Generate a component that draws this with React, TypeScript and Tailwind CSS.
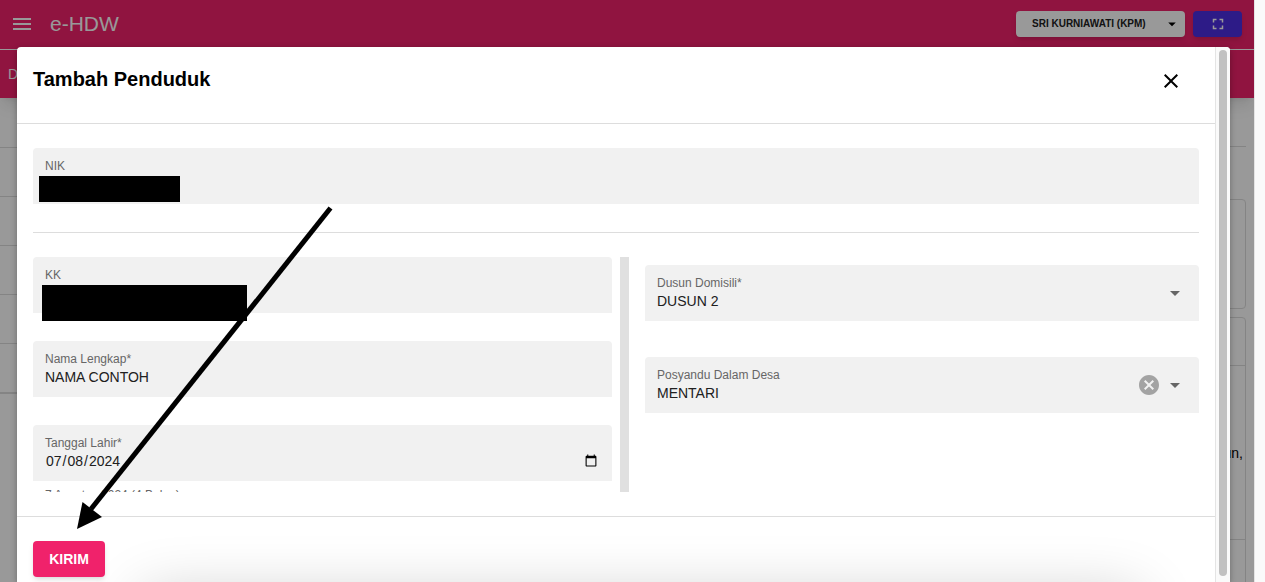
import React from 'react';
import { MdArrowDropDown, MdCancel, MdClose, MdFullscreen, MdMenu } from 'react-icons/md';

interface IFieldProps {
  id: string;
  label: string;
  children: React.ReactNode;
}

const inputStyle = 'block h-5 w-full bg-transparent text-sm leading-5 text-[#202020] outline-none';

const rows = ['a', 'b', 'c', 'd', 'e'];

const Field = ({ id, label, children }: IFieldProps) => {
  return (
    <div className="relative h-14 shrink-0 rounded-t bg-[#f1f1f1] px-3 pt-2.5">
      <label htmlFor={id} className="block h-4 text-xs leading-4 text-[#666]">{label}</label>
      {children}
    </div>
  );
}

const Header = () => {
  return (
    <header className="relative bg-[#f0226b] text-white shadow-lg">
      <div className="flex h-[50px] items-center justify-between border-b border-white pr-3 pb-0.5 pl-2.5">
        <div className="flex items-center gap-4">
          <button type="button" aria-label="Menu"><MdMenu size={24} /></button>
          <h1 className="text-[21px] leading-6">e-HDW</h1>
        </div>
        <div className="flex items-center gap-2">
          <button type="button" className="flex h-[26px] w-[169px] items-center justify-between rounded-sm bg-white pr-1 pl-4 text-[10px] font-bold text-[#202020] shadow-md">
            SRI KURNIAWATI (KPM)
            <MdArrowDropDown size={18} className="text-black" />
          </button>
          <button type="button" aria-label="Fullscreen" className="flex h-[26px] w-[49px] items-center justify-center rounded-sm bg-[#4b2de1] shadow-md">
            <MdFullscreen size={18} />
          </button>
        </div>
      </div>
      <nav className="flex h-12 items-center px-2 text-sm">
        <a href="#">D</a>
      </nav>
    </header>
  );
}

const Page = () => {
  return (
    <div className="h-full overflow-hidden bg-white">
      <Header />
      <div className="flex items-start justify-between">
        <ul className="w-2/5 border-b border-[#ddd]">
          <li className="h-[50px] border-b border-[#ddd]" />
          {rows.map((row) => (
            <li key={row} className="h-[49px] border-b border-[#ddd]" />
          ))}
        </ul>
        <div className="w-2/5 pr-2">
          <div className="h-[49px] border-b border-[#ddd]" />
          <div className="mt-[52px] h-[110px] rounded border border-[#ddd]" />
          <div className="mt-2 h-80 rounded border border-[#ddd]">
            <div className="h-12 border-b border-[#ddd]" />
            <div className="h-[174px] border-b border-[#ddd] pt-[77px] pr-0.5 text-right text-sm">
              un,
            </div>
          </div>
        </div>
      </div>
    </div>
  );
}

const Dialog = () => {
  return (
    <section role="dialog" aria-labelledby="judul" className="relative flex h-full overflow-hidden rounded-t bg-white shadow-[0_2px_6px_rgba(0,0,0,0.3)]">
      <form className="min-w-0 flex-1">
        <div className="flex h-[77px] items-start justify-between border-b border-[#ddd] pt-5 pr-8 pl-4">
          <h2 id="judul" className="text-xl leading-6 font-bold text-black">Tambah Penduduk</h2>
          <button type="button" aria-label="Tutup" className="pt-0.5 text-black"><MdClose size={24} /></button>
        </div>

        <div className="px-4 py-6">
          <Field id="nik" label="NIK">
            <input id="nik" className={inputStyle} />
            <div className="absolute top-7 left-1.5 h-[26px] w-[141px] bg-black" />
          </Field>
          <hr className="mt-7 mb-6 border-[#ddd]" />

          <div className="flex h-[235px] overflow-hidden">
            <div className="flex min-w-0 flex-1 flex-col gap-7">
              <Field id="kk" label="KK">
                <input id="kk" className={inputStyle} />
                <div className="absolute top-7 left-[9px] h-9 w-[205px] bg-black" />
              </Field>
              <Field id="nama" label="Nama Lengkap*">
                <input id="nama" className={inputStyle} defaultValue="NAMA CONTOH" />
              </Field>
              <div>
                <Field id="lahir" label="Tanggal Lahir*">
                  <input id="lahir" type="date" className={inputStyle} defaultValue="2024-07-08" />
                </Field>
                <p className="px-3 pt-1.5 text-xs leading-4 text-[#666]">7 Agustus 2024 (4 Bulan)</p>
              </div>
            </div>
            <div className="mr-4 ml-2 w-[9px] bg-[#e0e0e0]" />
            <div className="flex w-[554px] flex-col gap-9 pt-2">
              <Field id="dusun" label="Dusun Domisili*">
                <select id="dusun" className={`${inputStyle} appearance-none`}>
                  <option>DUSUN 2</option>
                </select>
                <MdArrowDropDown size={24} className="pointer-events-none absolute top-4 right-3 text-[#666]" />
              </Field>
              <Field id="posyandu" label="Posyandu Dalam Desa">
                <select id="posyandu" className={`${inputStyle} appearance-none`}>
                  <option>MENTARI</option>
                </select>
                <button type="button" aria-label="Hapus" className="absolute top-4 right-[38px] text-[#a3a3a3]"><MdCancel size={24} /></button>
                <MdArrowDropDown size={24} className="pointer-events-none absolute top-4 right-3 text-[#666]" />
              </Field>
            </div>
          </div>
        </div>

        <div className="border-t border-[#ddd] px-4 pt-6">
          <button type="submit" className="h-9 w-[72px] rounded-sm bg-[#f0226b] text-sm font-bold text-white shadow-md">KIRIM</button>
        </div>
      </form>

      <div className="w-[15px] border-l border-[#e4e4e4] bg-[#fafafa] pt-[3px] pb-1.5 pl-[3px]">
        <div className="h-full w-2 rounded-full bg-[#c1c1c1]" />
      </div>

      <div className="pointer-events-none absolute top-full right-[90px] left-[125px] mt-3 h-16 shadow-[0_0_60px_rgba(0,0,0,0.2)]" />
      <svg className="pointer-events-none absolute top-[155px] left-[55px]" width="265" height="330" viewBox="0 0 265 330">
        <path d="M258.500 6 L19 307" stroke="#000" strokeWidth="5" />
        <path d="M5 327 L10.500 300 L30 315 Z" />
      </svg>
    </section>
  );
}

const App = () => {
  return (
    <main className="flex h-screen overflow-hidden font-['Liberation_Sans',Arial,sans-serif]">
      <div className="relative min-w-0 flex-1">
        <Page />
        <div className="absolute inset-0 bg-black/40 pt-[47px] pr-6 pl-[17px]">
          <Dialog />
        </div>
      </div>
      <div className="w-[11px] border-l border-[#e4e4e4] bg-[#fafafa]" />
    </main>
  );
}

export default App;
